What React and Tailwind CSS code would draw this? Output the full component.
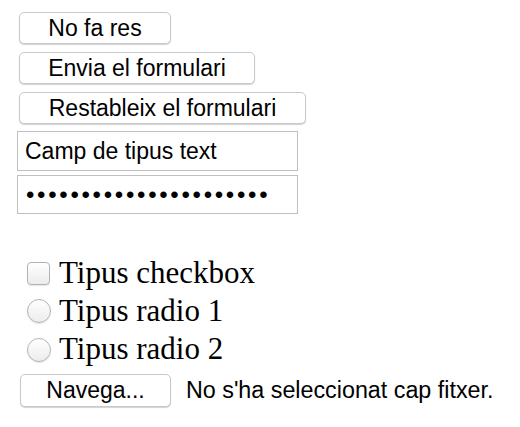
import React from 'react';

const sans = { fontFamily: '"Liberation Sans", Arial, sans-serif' };

const Boto = ({ children, className = '' }) => (
  <button
    type="button"
    className={`h-[32px] shrink-0 flex items-center justify-center bg-white border border-[#c9c9c9] rounded-[5px] shadow-[0_1px_1px_rgba(0,0,0,0.18)] text-[23px] text-black leading-none ${className}`}
  >
    {children}
  </button>
);

export default function App() {
  return (
    <div className="min-h-screen bg-white pl-[17px] pt-[12px]" style={sans}>
      {/* Botons */}
      <div className="flex flex-col items-start gap-[8px] pl-[2px]">
        <Boto className="w-[152px]">No fa res</Boto>
        <Boto className="w-[236px]">Envia el formulari</Boto>
        <Boto className="w-[287px]">Restableix el formulari</Boto>
      </div>

      {/* Camps de text */}
      <div className="flex flex-col gap-[4px] mt-[7px]">
        <input
          type="text"
          defaultValue="Camp de tipus text"
          className="w-[281px] h-[40px] border border-[#bfbfbf] px-[7px] text-[23px] text-black outline-none"
          style={sans}
        />
        <div className="w-[281px] h-[39px] border border-[#bfbfbf] px-[8px] flex items-center text-[24px] text-black tracking-[2.7px] leading-none">
          ••••••••••••••••••••••
        </div>
      </div>

      {/* Checkbox i radios */}
      <div
        className="flex flex-col mt-[41px] pl-[10px] text-[31px] text-black"
        style={{ fontFamily: '"Liberation Serif", "Times New Roman", serif' }}
      >
        <label className="h-[37px] flex items-center">
          <span className="shrink-0 w-[23px] h-[23px] rounded-[4px] border border-[#b3b3b3] bg-gradient-to-b from-white to-[#ececec] shadow-[0_1px_1px_rgba(0,0,0,0.1)] mr-[9px]" />
          <span>Tipus checkbox</span>
        </label>
        <label className="h-[38px] flex items-center">
          <span className="shrink-0 w-[24px] h-[24px] rounded-full border border-[#b3b3b3] bg-gradient-to-b from-white to-[#ececec] shadow-[0_1px_1px_rgba(0,0,0,0.1)] mr-[8px]" />
          <span>Tipus radio 1</span>
        </label>
        <label className="h-[39px] flex items-center">
          <span className="shrink-0 w-[24px] h-[24px] rounded-full border border-[#b3b3b3] bg-gradient-to-b from-white to-[#ececec] shadow-[0_1px_1px_rgba(0,0,0,0.1)] mr-[8px]" />
          <span>Tipus radio 2</span>
        </label>
      </div>

      {/* Fitxer */}
      <div className="flex items-center mt-[4px] pl-[3px]">
        <Boto className="w-[151px] h-[33px]">Navega...</Boto>
        <span className="ml-[15px] text-[23.3px] text-black">No s'ha seleccionat cap fitxer.</span>
      </div>
    </div>
  );
}
